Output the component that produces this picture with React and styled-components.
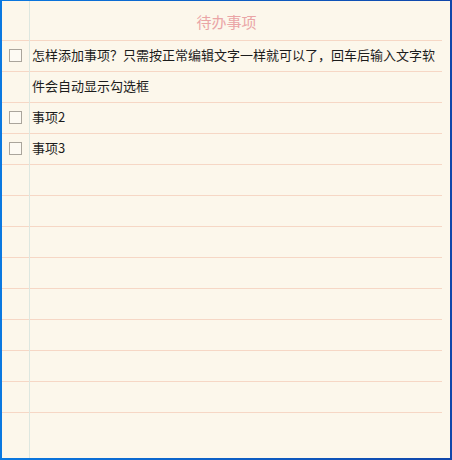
import React from "react";
import styled, { createGlobalStyle } from "styled-components";

const GlobalStyle = createGlobalStyle`
  html, body {
    margin: 0;
    padding: 0;
    background: #fcf7eb;
  }
`;

const Window = styled.div`
  box-sizing: border-box;
  width: 452px;
  height: 460px;
  border-style: solid;
  border-width: 1px 2px 2px 2px;
  border-image: linear-gradient(to right, #0a78e0, #1046aa) 1;
  display: flex;
  flex-direction: column;
  overflow: hidden;
`;

const Paper = styled.div`
  flex: 1;
  display: flex;
  flex-direction: column;
  padding-right: 8px;
  background-color: #fcf7eb;
  background-image: linear-gradient(
      to right,
      transparent 27px,
      #dde7e0 27px,
      #dde7e0 28px,
      transparent 28px
    ),
    repeating-linear-gradient(
      to bottom,
      #f6d7c5 0,
      #f6d7c5 1px,
      transparent 1px,
      transparent 31px
    );
  background-size: 100% 100%, 440px 373px;
  background-position: 0 0, 0 39px;
  background-repeat: no-repeat;
  font-family: "Noto Sans CJK SC", "Noto Sans", sans-serif;
`;

const Header = styled.div`
  height: 40px;
  box-sizing: border-box;
  padding: 1px 0 0 9px;
  display: flex;
  align-items: center;
  justify-content: center;
  color: #eaa5a6;
  font-size: 15px;
`;

const List = styled.ul`
  list-style: none;
  margin: -2px 0 0 0;
  padding: 0;
`;

const Item = styled.li`
  display: flex;
  align-items: flex-start;
  font-size: 13px;
  line-height: 31px;
  color: #1c1c1c;
`;

const Gutter = styled.div`
  flex: 0 0 30px;
  height: 31px;
  display: flex;
  align-items: center;
  padding-left: 7px;
  box-sizing: border-box;
`;

const Check = styled.input.attrs({ type: "checkbox" })`
  appearance: none;
  margin: 2px 0 0 0;
  width: 13px;
  height: 13px;
  box-sizing: border-box;
  border: 1px solid #aaa59c;
  background: #fdfaf3;
  border-radius: 0;
`;

const Text = styled.div`
  flex: 1;
  min-width: 0;
`;

const todos = [
  "怎样添加事项？只需按正常编辑文字一样就可以了，回车后输入文字软件会自动显示勾选框",
  "事项2",
  "事项3",
];

export default function App() {
  return (
    <>
      <GlobalStyle />
      <Window>
        <Paper>
          <Header>待办事项</Header>
          <List>
            {todos.map((t, i) => (
              <Item key={i}>
                <Gutter>
                  <Check />
                </Gutter>
                <Text>{t}</Text>
              </Item>
            ))}
          </List>
        </Paper>
      </Window>
    </>
  );
}
